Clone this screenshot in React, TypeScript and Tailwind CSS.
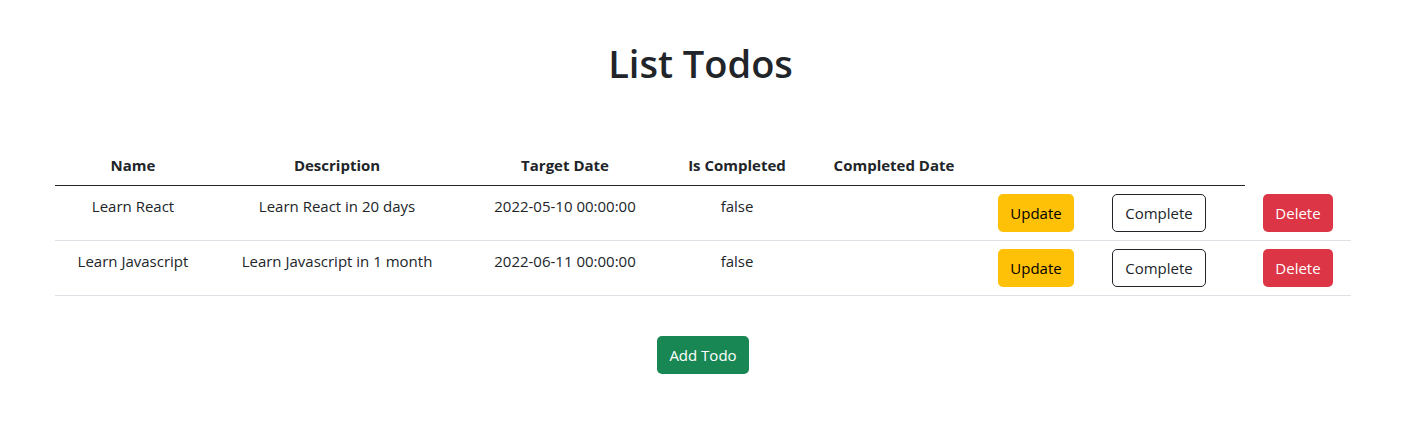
import React from 'react';

const todos = [
  { id: 1, name: 'Learn React', description: 'Learn React in 20 days', targetDate: '2022-05-10 00:00:00', done: false },
  { id: 2, name: 'Learn Javascript', description: 'Learn Javascript in 1 month', targetDate: '2022-06-11 00:00:00', done: false },
];

const App = () => {
  return (
    <div className="min-h-[438px] bg-white text-[#212529] font-['Segoe_UI','Open_Sans',sans-serif] text-[15px] leading-6">
      <h1 className="pt-[39px] text-center text-[38px] leading-[48px] font-semibold">List Todos</h1>

      <div className="ml-[55px] w-[1296px] mt-[58px]">
        <table className="w-full table-fixed border-collapse text-center">
          <thead>
            <tr>
              <th className="w-[156px] px-2 py-2 font-bold border-b border-[#212529]">Name</th>
              <th className="w-[252px] px-2 py-2 font-bold border-b border-[#212529]">Description</th>
              <th className="w-[204px] px-2 py-2 font-bold border-b border-[#212529]">Target Date</th>
              <th className="w-[140px] px-2 py-2 font-bold border-b border-[#212529]">Is Completed</th>
              <th className="w-[174px] px-2 py-2 font-bold border-b border-[#212529]">Completed Date</th>
              <th className="w-[110px] px-2 py-2 border-b border-[#212529]"></th>
              <th className="w-[154px] px-2 py-2 border-b border-[#212529]"></th>
              <th className="w-[106px]"></th>
            </tr>
          </thead>
          <tbody>
            {todos.map((todo) => (
              <tr key={todo.id} className="align-top">
                <td className="px-2 py-2 border-b border-[#dee2e6]">{todo.name}</td>
                <td className="px-2 py-2 border-b border-[#dee2e6]">{todo.description}</td>
                <td className="px-2 py-2 border-b border-[#dee2e6]">{todo.targetDate}</td>
                <td className="px-2 py-2 border-b border-[#dee2e6]">{String(todo.done)}</td>
                <td className="px-2 py-2 border-b border-[#dee2e6]"></td>
                <td className="px-2 py-2 border-b border-[#dee2e6]">
                  <button className="h-[38px] px-3 rounded-[5px] bg-[#ffc107] text-black">Update</button>
                </td>
                <td className="pl-2 pr-[26px] py-2 border-b border-[#dee2e6]">
                  <button className="h-[38px] px-3 rounded-[5px] border border-[#212529] text-[#212529]">Complete</button>
                </td>
                <td className="px-2 py-2 border-b border-[#dee2e6]">
                  <button className="h-[38px] px-3 rounded-[5px] bg-[#dc3545] text-white">Delete</button>
                </td>
              </tr>
            ))}
          </tbody>
        </table>

        <div className="mt-10 flex justify-center">
          <button className="h-[38px] px-3 rounded-[5px] bg-[#198754] text-white">Add Todo</button>
        </div>
      </div>
    </div>
  );
};

export default App;
